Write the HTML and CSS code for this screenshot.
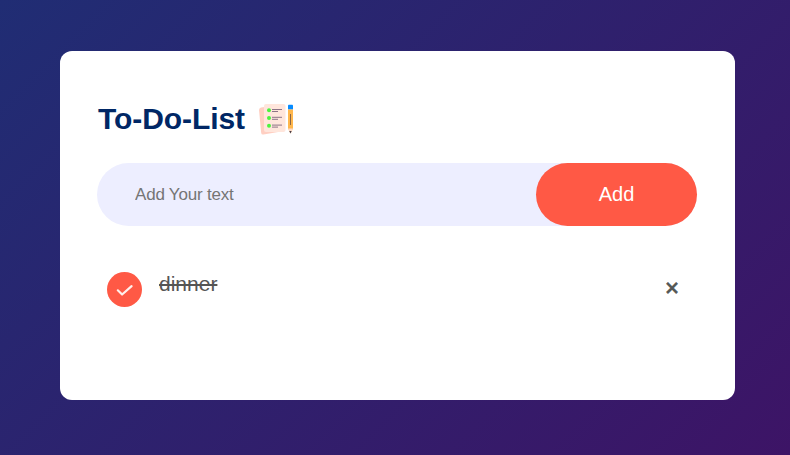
FILE: index.html
```html
<!DOCTYPE html>
<html lang="en">
<head>
<meta charset="utf-8">
<title>To-Do-List</title>
<link rel="stylesheet" href="styles.css">
</head>
<body>
<main class="card">
  <h1 class="title"><span class="name">To-Do-List</span>
    <svg class="icon" viewBox="0 0 36 36">
      <path fill="#ffcfc2" d="M2 5.500 20 3 25 29 4.500 32.500Q2.500 33 2.200 31L0 8Q0 6 2 5.500"/>
      <rect x="5" y="2" width="21.500" height="28" rx="2" fill="#ffe6dc"/>
      <g fill="#4cf43e"><circle cx="10" cy="8.200" r="2"/><circle cx="10" cy="16" r="2"/><circle cx="10" cy="23.800" r="2"/></g>
      <path stroke="#8d7486" d="M13 7.500h10M13 9.500h6M13 15.300h10M13 17.300h6M13 23.100h10M13 25.100h6"/>
      <path fill="#068bff" d="M29 3.500q0-.8.800-.8h3.400q.8 0 .8.800V7.500h-5z"/><path fill="#ffb74d" d="M29 7.500h5v19l-2.500 5-2.500-5z"/><path fill="#ffdccb" d="M29 26.500h5l-2 4.500h-1z"/><path fill="#8a6546" d="M31 12h1v11h-1z"/><path fill="#443c46" d="M30.300 29h2.400l-1.200 2.500z"/>
    </svg>
  </h1>
  <div class="row">
    <input class="field" type="text" placeholder="Add Your text">
    <button class="add">Add</button>
  </div>
  <ul class="list">
    <li class="item">
      <svg class="check" viewBox="0 0 35 35"><circle cx="17.500" cy="17.500" r="17.500" fill="#ff5945"/><path d="M10.800 18.300l4.300 4.200 9.500-8.300" fill="none" stroke="#fff0ec" stroke-width="2.200" stroke-linecap="round" stroke-linejoin="round"/></svg>
      <span class="text">dinner</span>
      <span class="close">×</span>
    </li>
  </ul>
</main>
</body>
</html>
```
FILE: styles.css
```css
* { box-sizing: border-box; margin: 0; padding: 0; font-family: "Liberation Sans", Arial, sans-serif; }
body { height: 455px; padding: 51px 55px 0 60px; background: linear-gradient(135deg, #202d74, #3d1466); }
.card { height: 349px; padding: 48px 38px 0 37px; background: #fff; border-radius: 12px; }
.title { display: flex; align-items: center; height: 40px; padding-left: 1px; font-size: 30px; color: #002765; }
.name { width: 147px; letter-spacing: -0.08px; white-space: nowrap; }
.icon { width: 36px; height: 36px; margin: 2px 0 0 14px; }
.row { display: flex; height: 63px; margin-top: 24px; background: #edeeff; border-radius: 32px; }
.field { flex: 1; min-width: 0; padding-left: 38px; border: 0; background: none; font-size: 17px; letter-spacing: -0.2px; }
.add { width: 161px; border: 0; border-radius: 32px; background: #ff5945; color: #fff; font-size: 20px; }
.list { margin-top: 46px; list-style: none; }
.item { display: flex; height: 35px; padding-left: 10px; }
.check { width: 35px; height: 35px; }
.text { flex: 1; margin-left: 17px; font-size: 21px; color: #555; text-decoration: line-through; }
.close { width: 32px; margin-top: 2px; font-size: 24px; color: #555; -webkit-text-stroke: 0.8px #555; }
```
